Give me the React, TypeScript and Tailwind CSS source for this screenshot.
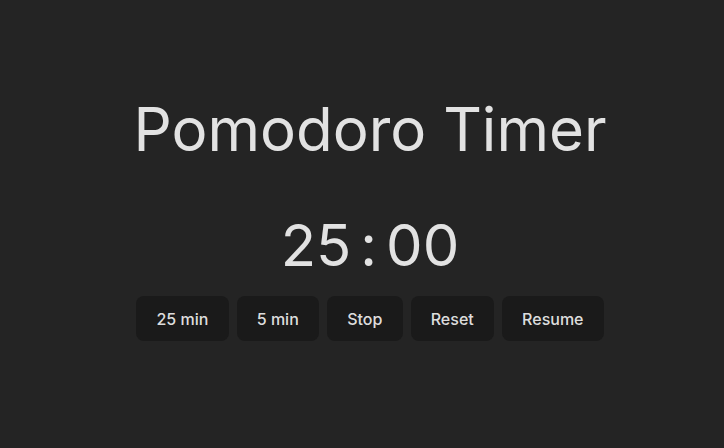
import React from "react"

const buttons = ["25 min", "5 min", "Stop", "Reset", "Resume"]

const App = () => {
  return (
    <div
      className="min-h-screen w-full bg-[#242424] pl-4 pt-[96px] text-[rgba(255,255,255,0.87)] flex flex-col items-center"
      style={{ fontFamily: "Inter, 'Noto Sans', sans-serif" }}
    >
      <h1 className="text-[60px] leading-[66px] font-normal">Pomodoro Timer</h1>

      {/* Timer */}
      <div className="mt-[51px] text-[58px] leading-[64px] flex items-center">
        <span>25</span>
        <span className="mx-[9px]">:</span>
        <span>00</span>
      </div>

      <div className="mt-[19px] flex gap-2">
        {buttons.map((label) => (
          <button
            key={label}
            className="rounded-lg border border-transparent bg-[#1a1a1a] px-[1.2em] py-[0.6em] text-base font-medium leading-6 text-[rgba(255,255,255,0.87)]"
          >
            {label}
          </button>
        ))}
      </div>
    </div>
  )
}

export default App
